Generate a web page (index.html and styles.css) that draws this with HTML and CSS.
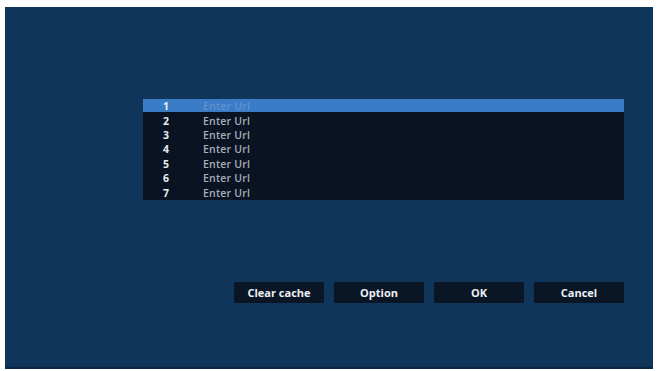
FILE: index.html
```html
<!DOCTYPE html>
<html lang="en">
<head>
    <meta charset="UTF-8">
    <title>Url list</title>
    <link rel="stylesheet" href="styles.css">
</head>
<body>
    <div class="screen">
        <ul class="url-list">
            <li class="selected"><span class="num">1</span><span class="url">Enter Url</span></li>
            <li><span class="num">2</span><span class="url">Enter Url</span></li>
            <li><span class="num">3</span><span class="url">Enter Url</span></li>
            <li><span class="num">4</span><span class="url">Enter Url</span></li>
            <li><span class="num">5</span><span class="url">Enter Url</span></li>
            <li><span class="num">6</span><span class="url">Enter Url</span></li>
            <li><span class="num">7</span><span class="url">Enter Url</span></li>
        </ul>
        <div class="buttons">
            <div class="btn">Clear cache</div>
            <div class="btn">Option</div>
            <div class="btn">OK</div>
            <div class="btn">Cancel</div>
        </div>
    </div>
</body>
</html>
```

FILE: styles.css
```css
* {
    padding: 0;
    margin: 0;
    box-sizing: border-box;
}
body {
    background: #ffffff;
    font-family: "Open Sans", "DejaVu Sans", sans-serif;
}
.screen {
    margin: 7px 4px 0 5px;
    height: 362px;
    background: #10355a;
    border-bottom: 2px solid #0b2743;
    padding: 92px 29px 0 138px;
    display: flex;
    flex-direction: column;
}
.url-list {
    list-style-type: none;
    height: 101px;
    background: #0a1322;
}
.url-list li {
    display: flex;
    align-items: center;
    height: 14.4px;
    font-size: 10.5px;
    font-weight: 600;
}
.url-list li.selected {
    background: #3b7cc6;
    height: 13px;
    margin-bottom: 1.4px;
}
.num {
    width: 46px;
    text-align: center;
    color: #e8ecf2;
    font-weight: 700;
}
.url {
    padding-left: 14px;
    color: #a7adb6;
    letter-spacing: 0.2px;
}
.selected .url {
    color: #5f92d0;
}
.buttons {
    display: flex;
    justify-content: flex-end;
    gap: 10px;
    margin-top: 82px;
}
.btn {
    width: 90px;
    height: 21px;
    line-height: 21px;
    background: #0a1526;
    color: #eef1f5;
    text-align: center;
    font-size: 11px;
    font-weight: 700;
    border-radius: 1px;
}
```
